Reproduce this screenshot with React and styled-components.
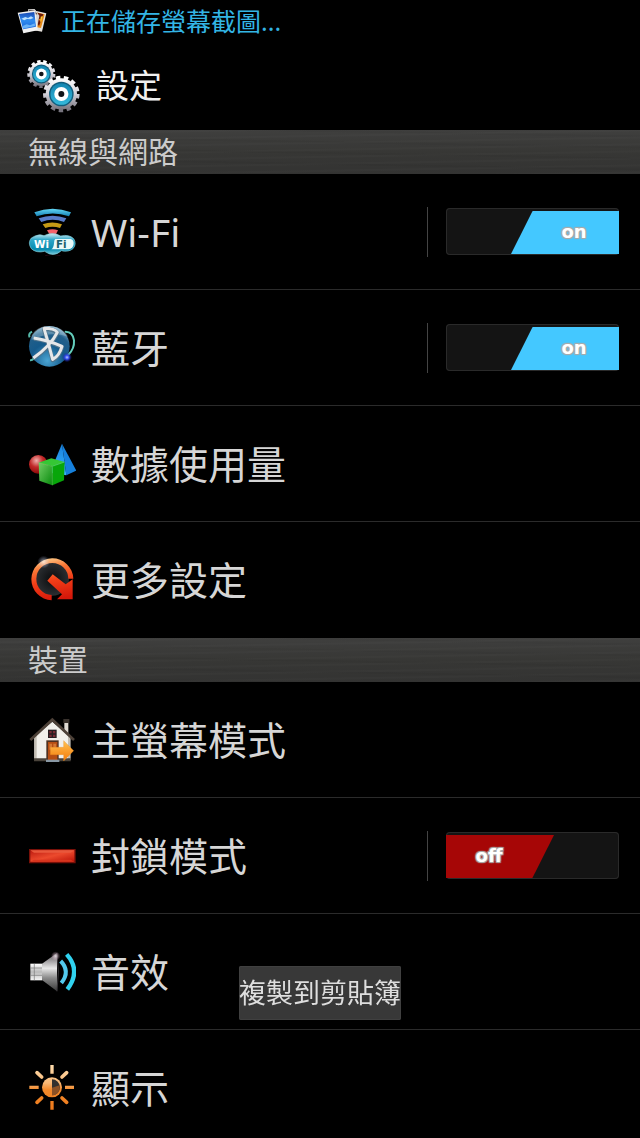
import React from "react";
import styled, { createGlobalStyle } from "styled-components";

const GlobalStyle = createGlobalStyle`
  *, *::before, *::after { box-sizing: border-box; }
  html, body, #root { height: 100%; }
  body {
    margin: 0;
    background: #000;
    color: #d6d6d6;
    font-family: "Noto Sans", "Noto Sans CJK TC", sans-serif;
  }
`;

const Screen = styled.div`
  display: flex;
  flex-direction: column;
  height: 100vh;
  overflow: hidden;
  background: #000;
`;

const StatusBar = styled.div`
  display: flex;
  flex: none;
  align-items: center;
  gap: 13px;
  height: 42px;
  padding: 0 16px;
  color: #33b5e5;
  font-size: 25px;
  line-height: 32px;
`;

const TitleBar = styled.header`
  display: flex;
  flex: none;
  align-items: center;
  gap: 14px;
  height: 88px;
  padding: 0 26px;
`;

const Title = styled.h1`
  margin: 0;
  color: #f0f0f0;
  font-size: 33px;
  font-weight: 400;
  line-height: 40px;
`;

const SettingsArea = styled.main`
  flex: 1;
  min-height: 0;
  overflow-y: auto;
  scrollbar-width: none;
`;

const SectionTitle = styled.h2`
  height: 44px;
  margin: 0;
  padding: 0 28px;
  background:
    repeating-linear-gradient(179deg, transparent 0 3px, rgba(255, 255, 255, 0.015) 4px 5px, transparent 6px 7px),
    repeating-linear-gradient(181deg, transparent 0 5px, rgba(0, 0, 0, 0.04) 6px 7px, transparent 8px 11px),
    linear-gradient(#3f3f3e, #373735 50%, #333332);
  color: #cbcbcb;
  font-size: 30px;
  font-weight: 400;
  line-height: 44px;
`;

const List = styled.ul`
  margin: 0;
  padding: 0;
  list-style: none;
`;

const Row = styled.li`
  display: flex;
  align-items: center;
  height: 116px;
  padding: 0 21px 0 28px;
  border-bottom: 1px solid ${(p) => (p.$last ? "transparent" : "#2b2b2b")};
`;

const RowLink = styled.a`
  display: flex;
  flex: 1;
  align-items: center;
  gap: 15px;
  color: inherit;
  font-size: 39px;
  line-height: 48px;
  text-decoration: none;
`;

const SwitchArea = styled.div`
  display: flex;
  align-items: center;
  height: 50px;
  padding-left: 18px;
  border-left: 1px solid #444;
`;

const Switch = styled.label`
  display: flex;
  justify-content: ${(p) => (p.$on ? "flex-end" : "flex-start")};
  width: 173px;
  height: 47px;
  padding: 3px 0 1px;
  border-radius: 4px;
  background: #141414;
  box-shadow: inset 0 0 0 1px #2a2a2a;
  cursor: pointer;
`;

const SwitchInput = styled.input`
  appearance: none;
  width: 0;
  height: 0;
  margin: 0;
`;

const SwitchThumb = styled.span`
  width: 108px;
  height: 43px;
  padding: ${(p) => (p.$on ? "0 0 0 18px" : "0 22px 0 0")};
  background: ${(p) => (p.$on ? "#44c8ff" : "#a60606")};
  clip-path: ${(p) =>
    p.$on
      ? "polygon(20% 0, 100% 0, 100% 100%, 0 100%)"
      : "polygon(0 0, 100% 0, 80% 100%, 0 100%)"};
  color: #fff;
  font-family: "DejaVu Sans", sans-serif;
  font-size: 18px;
  font-weight: 700;
  line-height: 42px;
  text-align: center;
  text-shadow: 1px 1px 1px #aaa, -1px 1px 1px #aaa, 1px -1px 1px #aaa, -1px -1px 1px #aaa;
`;

const Toast = styled.div`
  position: fixed;
  bottom: 118px;
  left: 50%;
  display: flex;
  align-items: center;
  justify-content: center;
  width: 162px;
  height: 54px;
  border-radius: 2px;
  background: #383838;
  box-shadow: inset 0 0 0 1px #404040;
  color: #dedede;
  font-size: 27px;
  line-height: 36px;
  white-space: nowrap;
  transform: translateX(-50%);
`;

const Glyph = styled.svg`
  display: block;
  flex: none;
  width: ${(p) => p.$w}px;
  height: ${(p) => p.$h}px;
`;

const Icon = ({ top, children }) => (
  <Glyph $w={48} $h={48} viewBox={`24 ${top} 144 144`} aria-hidden="true">
    {children}
  </Glyph>
);

const PhotosIcon = () => (
  <Glyph $w={32} $h={28} viewBox="48 21 96 84" aria-hidden="true">
    <defs>
      <linearGradient id="sky" x1="0" y1="0" x2="0" y2="1">
        <stop offset="0" stopColor="#1747b0" />
        <stop offset=".5" stopColor="#2f8cf0" />
        <stop offset="1" stopColor="#1a62d8" />
      </linearGradient>
    </defs>
    <path d="M100 31l39 9-13 55-24-4z" fill="#e6e2dc" />
    <path d="M104 36l30 7-11 41-19-4z" fill="#e88a18" />
    <path d="M112 38l18 5-5 12-9 3 6 8-5 12-7-10z" fill="#6b1a08" />
    <path d="M122 50l6-2-6 22z" fill="#f8cf38" />
    <path d="M84 28l20-1 14 20-8 44-24-4z" fill="#d7d5d3" />
    <path d="M86 31l17 0 9 12-26 2z" fill="#3a2b28" />
    <path d="M53 38l53-7 7 60-43 9z" fill="#f2f2f2" />
    <path d="M57 42l46-6 5 44-39 8z" fill="url(#sky)" />
    <path d="M64 56l12-5 8 3 9-5 8 5-10 4-10-1-8 4z" fill="#b9e0ff" />
    <path d="M68 78l12-5 10 3 14-6 1 8-36 8z" fill="#68b2f8" />
  </Glyph>
);

const Gear = ({ cx, cy, r, teeth }) => {
  const step = (2 * Math.PI * r * 0.88) / teeth;
  return (
    <g>
      <circle cx={cx} cy={cy} r={r * 0.88} fill="none" stroke="url(#steel)" strokeWidth={r * 0.2}
        strokeDasharray={`${step * 0.56} ${step * 0.44}`} />
      <circle cx={cx} cy={cy} r={r * 0.84} fill="url(#steel)" />
      <circle cx={cx} cy={cy} r={r * 0.66} fill="#125d7c" />
      <circle cx={cx} cy={cy} r={r * 0.58} fill="url(#ring)" />
      <circle cx={cx} cy={cy} r={r * 0.38} fill="#fff" />
      <circle cx={cx} cy={cy} r={r * 0.16} fill="#101418" />
    </g>
  );
};

const GearsIcon = () => (
  <Glyph $w={56} $h={56} viewBox="78 174 168 168" aria-hidden="true">
    <defs>
      <linearGradient id="steel" x1="0" y1="0" x2="0" y2="1">
        <stop offset="0" stopColor="#fff" />
        <stop offset=".5" stopColor="#d2d0d8" />
        <stop offset="1" stopColor="#77747e" />
      </linearGradient>
      <linearGradient id="ring" x1="0" y1="0" x2="0" y2="1">
        <stop offset="0" stopColor="#1284b0" />
        <stop offset="1" stopColor="#35b9dc" />
      </linearGradient>
    </defs>
    <Gear cx={124} cy={222} r={43} teeth={13} />
    <Gear cx={184} cy={282} r={56} teeth={13} />
  </Glyph>
);

const WifiIcon = () => (
  <Icon top={24}>
    <defs>
      <linearGradient id="cloud" x1="0" y1="0" x2="0" y2="1">
        <stop offset="0" stopColor="#d5edf3" />
        <stop offset=".3" stopColor="#2ba6c8" />
        <stop offset=".75" stopColor="#078aae" />
        <stop offset="1" stopColor="#7acbdc" />
      </linearGradient>
      <linearGradient id="arc" x1="0" y1="0" x2="0" y2="1">
        <stop offset="0" stopColor="#62d6f5" />
        <stop offset="1" stopColor="#1580b4" />
      </linearGradient>
    </defs>
    <path d="M43 37Q98 16 153 37L147 49Q98 32 50 49z" fill="url(#arc)" />
    <path d="M56 55Q98 40 139 55L132 66Q98 53 64 66z" fill="#587cca" />
    <path d="M68 73Q97 62 126 73L120 84Q97 76 76 84z" fill="#c69a15" />
    <path d="M81 91Q97 84 114 91L108 102H88z" fill="#f4626a" />
    <path d="M45 108Q60 101 72 107Q98 94 122 108Q147 102 161 116Q171 132 159 146Q146 157 124 152Q100 174 74 154Q49 160 34 146Q22 128 34 114z" fill="url(#cloud)" stroke="#7fcbd9" strokeWidth="2" />
    <path d="M106 117H151Q162 119 161 132Q159 147 146 148H94Q101 144 102 130Q102 120 106 117z" fill="#e8fafa" />
    <g fontFamily="DejaVu Sans, sans-serif" fontSize="31" fontWeight="700">
      <text x="42" y="143" fill="#fff">Wi</text>
      <text x="108" y="143" fill="#17606c">Fi</text>
    </g>
    <path d="M76 168Q98 172 121 168" fill="none" stroke="#5c1028" strokeWidth="3" />
  </Icon>
);

const BluetoothIcon = () => (
  <Icon top={27}>
    <defs>
      <radialGradient id="orb" cx=".45" cy=".85" r=".9">
        <stop offset="0" stopColor="#4aa4d2" />
        <stop offset=".45" stopColor="#155a8b" />
        <stop offset=".75" stopColor="#225f8a" />
        <stop offset="1" stopColor="#9fc8df" />
      </radialGradient>
      <radialGradient id="spark">
        <stop offset="0" stopColor="#b9c9ff" />
        <stop offset=".4" stopColor="#344cf0" />
        <stop offset="1" stopColor="#141b8e" stopOpacity="0" />
      </radialGradient>
    </defs>
    <circle cx="88" cy="94" r="61" fill="url(#orb)" />
    <path d="M35 60Q55 28 98 34Q130 38 144 65Q90 47 35 75z" fill="#d9edf6" opacity=".3" />
    <path d="M36 50Q24 56 29 67M30 136Q38 137 43 127" fill="none" stroke="#55b8a9" strokeWidth="6" />
    <path d="M137 50Q159 51 162 76Q164 101 145 119" fill="none" stroke="#63cdbb" strokeWidth="6" strokeLinecap="round" />
    <path d="M42 71Q80 76 126 96Q118 125 98 135Q86 88 72 42Q104 42 112 54Q92 94 40 131" fill="none" stroke="#50748c" strokeWidth="13" strokeLinejoin="round" />
    <path d="M41 69Q80 74 126 94Q118 123 98 133Q86 86 72 40Q104 40 112 52Q92 92 40 129" fill="none" stroke="#e5e7e9" strokeWidth="9" strokeLinejoin="round" />
    <circle cx="141" cy="127" r="15" fill="url(#spark)" />
  </Icon>
);

const ShapesIcon = () => (
  <Icon top={15}>
    <defs>
      <radialGradient id="ball" cx=".4" cy=".3" r=".7">
        <stop offset="0" stopColor="#efb0ad" />
        <stop offset=".5" stopColor="#c22a2a" />
        <stop offset="1" stopColor="#8d0909" />
      </radialGradient>
      <linearGradient id="cubeLeft" x1="0" y1="0" x2="1" y2="1">
        <stop offset="0" stopColor="#72ce65" />
        <stop offset="1" stopColor="#078a0c" />
      </linearGradient>
      <linearGradient id="pyramid" x1="0" y1="0" x2="0" y2="1">
        <stop offset="0" stopColor="#187fdb" />
        <stop offset="1" stopColor="#39b6ff" />
      </linearGradient>
    </defs>
    <circle cx="55" cy="88" r="28" fill="url(#ball)" />
    <path d="M126 26L90 113L139 121z" fill="url(#pyramid)" />
    <path d="M126 26L169 107L139 121z" fill="#1680dc" />
    <path d="M56 83L94 70L134 81L97 94z" fill="#35c735" />
    <path d="M56 83L97 94V151L58 137z" fill="url(#cubeLeft)" />
    <path d="M97 94L134 81L132 136L97 151z" fill="#08a60a" />
    <path d="M97 94V151M56 83L97 94L134 81" fill="none" stroke="#78e473" strokeWidth="2" opacity=".7" />
  </Icon>
);

const MoreIcon = () => (
  <Icon top={18}>
    <defs>
      <linearGradient id="fire" gradientUnits="userSpaceOnUse" x1="75" y1="24" x2="100" y2="150">
        <stop offset="0" stopColor="#ffd18d" />
        <stop offset=".25" stopColor="#fa7736" />
        <stop offset=".55" stopColor="#f13e18" />
        <stop offset="1" stopColor="#d5180a" />
      </linearGradient>
      <radialGradient id="dark">
        <stop offset="0" stopColor="#090b0d" />
        <stop offset="1" stopColor="#2b2e31" />
      </radialGradient>
      <radialGradient id="flare">
        <stop offset="0" stopColor="#fff" />
        <stop offset="1" stopColor="#b9c9ff" stopOpacity="0" />
      </radialGradient>
    </defs>
    <circle cx="97" cy="87" r="50" fill="url(#dark)" />
    <path d="M95 151A63 63 0 1 1 160 86H145A48 48 0 1 0 95 135z" fill="url(#fire)" />
    <path d="M98 73L137 103L158 88V148H111L126 133L82 92z" fill="url(#fire)" />
    <circle cx="71" cy="36" r="19" fill="url(#flare)" opacity=".65" />
  </Icon>
);

const HomeIcon = () => (
  <Icon top={18}>
    <defs>
      <linearGradient id="arrow" x1="0" y1="0" x2="0" y2="1">
        <stop offset="0" stopColor="#ffc354" />
        <stop offset="1" stopColor="#f57a08" />
      </linearGradient>
    </defs>
    <path d="M133 34H145V74L133 65z" fill="#ded9d2" />
    <path d="M130 27H148V39H130z" fill="#39322d" />
    <path d="M43 78L97 35L151 82V150H43z" fill="#f1efea" />
    <path d="M43 79L50 74V150H43zM144 78L151 83V150H144z" fill="#c3beb4" />
    <path d="M31 90L97 29L162 90" fill="none" stroke="#4d4138" strokeWidth="8" />
    <path d="M42 145H152V154H42z" fill="#4a433b" />
    <path d="M84 59H110V84H84z" fill="#261d20" />
    <path d="M88 63H95V70H88zM99 63H106V70H99zM88 74H95V81H88zM99 74H106V81H99z" fill="#782a34" />
    <path d="M79 91H116V150H79z" fill="#4e3020" />
    <path d="M84 96H112V150H84z" fill="#b64d12" />
    <path d="M88 101H96V119H88zM100 101H108V119H100z" fill="#d37834" />
    <path d="M78 149H118V156H78z" fill="#8998a4" />
    <path d="M91 112H131V92L161 122L131 153V134H91z" fill="url(#arrow)" stroke="#e58a1d" strokeWidth="1" />
  </Icon>
);

const BlockIcon = () => (
  <Icon top={21}>
    <defs>
      <linearGradient id="bar" x1="0" y1="0" x2="1" y2="1">
        <stop offset="0" stopColor="#bd1b10" />
        <stop offset=".5" stopColor="#ec4a2d" />
        <stop offset="1" stopColor="#bb1308" />
      </linearGradient>
    </defs>
    <path d="M27 72H167V115H27z" fill="#781008" />
    <path d="M31 76H163V110H31z" fill="url(#bar)" />
    <path d="M31 76H163L152 83H42z" fill="#e8583c" />
    <path d="M42 104H152L163 110H31z" fill="#d8351e" />
  </Icon>
);

const SoundIcon = () => (
  <Icon top={24}>
    <defs>
      <linearGradient id="metal" x1="0" y1="0" x2="0" y2="1">
        <stop offset="0" stopColor="#575257" />
        <stop offset=".4" stopColor="#e8e8e8" />
        <stop offset=".65" stopColor="#8a8a8a" />
        <stop offset="1" stopColor="#393939" />
      </linearGradient>
      <linearGradient id="horn" x1="0" y1="0" x2="0" y2="1">
        <stop offset="0" stopColor="#fff" />
        <stop offset=".5" stopColor="#bababa" />
        <stop offset="1" stopColor="#f5f5f5" />
      </linearGradient>
      <radialGradient id="glint">
        <stop offset="0" stopColor="#fff" />
        <stop offset="1" stopColor="#efb0d4" stopOpacity="0" />
      </radialGradient>
    </defs>
    <path d="M31 71H67V121H31z" fill="url(#horn)" />
    <path d="M31 84H67M31 106H67M43 71V121" stroke="#777" strokeWidth="2" />
    <path d="M66 71L111 39V154L66 120z" fill="url(#metal)" />
    <path d="M111 39Q119 96 111 154" fill="none" stroke="#39363a" strokeWidth="3" />
    <path d="M122 63Q152 94 124 129" fill="none" stroke="#52c9ed" strokeWidth="12" />
    <path d="M140 43Q184 92 142 148" fill="none" stroke="#30d2ef" strokeWidth="13" />
    <circle cx="107" cy="48" r="14" fill="url(#glint)" opacity=".75" />
  </Icon>
);

const DisplayIcon = () => (
  <Icon top={27}>
    <defs>
      <linearGradient id="sun" gradientUnits="userSpaceOnUse" x1="95" y1="30" x2="95" y2="164">
        <stop offset="0" stopColor="#ffdeb0" />
        <stop offset=".4" stopColor="#f8b876" />
        <stop offset=".55" stopColor="#f38a2c" />
        <stop offset="1" stopColor="#ee7a1b" />
      </linearGradient>
    </defs>
    <g fill="none" stroke="url(#sun)" strokeWidth="11" strokeLinecap="round">
      <path d="M91 30H101V56H91zM91 138H101V164H91z" fill="url(#sun)" stroke="none" />
      <path d="M28 92H56V102H28zM135 92H162V102H135z" fill="url(#sun)" stroke="none" />
      <path d="M51 53L65 66M140 53L126 66M51 142L65 129M140 142L126 129" />
    </g>
    <circle cx="96" cy="97" r="30" fill="url(#sun)" />
    <path d="M96 73A24 24 0 0 1 96 121z" fill="#33302e" />
    <path d="M96 98L119 91A24 24 0 0 1 96 121z" fill="#8c5125" />
  </Icon>
);

function SettingSwitch({ label, defaultOn }) {
  const [on, setOn] = React.useState(defaultOn);
  return (
    <SwitchArea>
      <Switch $on={on}>
        <SwitchInput type="checkbox" role="switch" aria-label={label} checked={on}
          onChange={(e) => setOn(e.target.checked)} />
        <SwitchThumb $on={on}>{on ? "on" : "off"}</SwitchThumb>
      </Switch>
    </SwitchArea>
  );
}

const sections = [
  {
    title: "無線與網路",
    items: [
      { label: "Wi-Fi", icon: WifiIcon, on: true },
      { label: "藍牙", icon: BluetoothIcon, on: true },
      { label: "數據使用量", icon: ShapesIcon },
      { label: "更多設定", icon: MoreIcon },
    ],
  },
  {
    title: "裝置",
    items: [
      { label: "主螢幕模式", icon: HomeIcon },
      { label: "封鎖模式", icon: BlockIcon, on: false },
      { label: "音效", icon: SoundIcon },
      { label: "顯示", icon: DisplayIcon },
    ],
  },
];

export default function App() {
  return (
    <Screen lang="zh-Hant">
      <GlobalStyle />
      <StatusBar>
        <PhotosIcon />
        <span>正在儲存螢幕截圖...</span>
      </StatusBar>
      <TitleBar>
        <GearsIcon />
        <Title>設定</Title>
      </TitleBar>
      <SettingsArea>
        {sections.map((section) => (
          <section key={section.title}>
            <SectionTitle>{section.title}</SectionTitle>
            <List>
              {section.items.map(({ label, icon: ItemIcon, on }, i) => (
                <Row key={label} $last={i === section.items.length - 1}>
                  <RowLink href="#">
                    <ItemIcon />
                    <span>{label}</span>
                  </RowLink>
                  {on !== undefined && <SettingSwitch label={label} defaultOn={on} />}
                </Row>
              ))}
            </List>
          </section>
        ))}
      </SettingsArea>
      <Toast role="status">複製到剪貼簿</Toast>
    </Screen>
  );
}
